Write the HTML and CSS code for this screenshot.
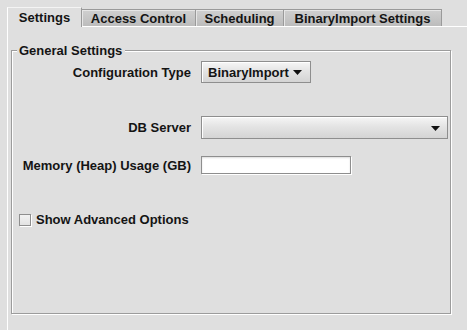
FILE: index.html
```html
<!DOCTYPE html>
<html>
<head>
<meta charset="utf-8">
<link rel="stylesheet" href="styles.css">
</head>
<body>
<div class="window">
  <div class="tabs">
    <div class="tab selected">Settings</div>
    <div class="tab w-access">Access Control</div>
    <div class="tab w-sched">Scheduling</div>
    <div class="tab w-binary">BinaryImport Settings</div>
  </div>
  <div class="pane">
    <div class="group">
      <div class="legend">General Settings</div>
      <div class="row row-config">
        <span class="label">Configuration Type</span>
        <div class="combo combo-small">
          <span class="combo-text">BinaryImport</span>
          <svg class="arrow" width="9" height="5" viewBox="0 0 9 5"><polygon points="0,0 9,0 4.5,5" fill="#111"/></svg>
        </div>
      </div>
      <div class="row row-db">
        <span class="label">DB Server</span>
        <div class="combo combo-wide">
          <span class="combo-text"></span>
          <svg class="arrow" width="9" height="5" viewBox="0 0 9 5"><polygon points="0,0 9,0 4.5,5" fill="#111"/></svg>
        </div>
      </div>
      <div class="row row-mem">
        <span class="label">Memory (Heap) Usage (GB)</span>
        <div class="field"></div>
      </div>
      <div class="check-row">
        <span class="checkbox"></span>
        <span class="check-label">Show Advanced Options</span>
      </div>
    </div>
  </div>
</div>
</body>
</html>
```

FILE: styles.css
```css
html, body {
  margin: 0;
  padding: 0;
}
body {
  background: #dfdfdf;
  font-family: "Liberation Sans", Arial, sans-serif;
  font-weight: bold;
  font-size: 13px;
  color: #141414;
  width: 467px;
  height: 330px;
  overflow: hidden;
}
.window {
  padding: 7px 0 0 7px;
}
.tabs {
  display: flex;
  align-items: flex-end;
  height: 19px;
  position: relative;
  z-index: 1;
}
.tab {
  box-sizing: border-box;
  height: 17px;
  border-top: 1px solid #9a9a9a;
  border-right: 1px solid #9a9a9a;
  background: linear-gradient(#d0d0d0, #bcbcbc);
  box-shadow: inset 1px 1px 0 #e6e6e6;
  display: flex;
  align-items: center;
  justify-content: center;
  line-height: 15px;
  white-space: nowrap;
}
.tab.selected {
  width: 75px;
  height: 20px;
  margin-bottom: -1px;
  background: #dfdfdf;
  border-top: 1px solid #f4f4f4;
  border-left: 1px solid #ffffff;
  border-right: 1px solid #9a9a9a;
  box-shadow: none;
  padding-bottom: 1px;
}
.w-access { width: 114px; }
.w-sched { width: 88px; }
.w-binary { width: 158px; }

.pane {
  border-top: 1px solid #ffffff;
  border-left: 1px solid #ffffff;
  padding: 23px 0 0 3px;
  height: 310px;
  box-sizing: border-box;
}
.group {
  position: relative;
  box-sizing: border-box;
  width: 440px;
  height: 264px;
  border: 1px solid #9c9c9c;
  box-shadow: inset 1px 1px 0 #ffffff, 1px 1px 0 #ffffff;
  padding: 10px 2px 0 0;
}
.legend {
  position: absolute;
  top: -8px;
  left: 5px;
  padding: 0 3px 0 2px;
  background: #dfdfdf;
  line-height: 16px;
}
.row {
  display: grid;
  grid-template-columns: 179px auto;
  column-gap: 10px;
  align-items: center;
  justify-items: start;
}
.label {
  justify-self: end;
  white-space: nowrap;
}
.row-config { margin-top: 0; }
.row-db { margin-top: 33px; }
.row-mem { margin-top: 17px; }

.combo {
  box-sizing: border-box;
  display: flex;
  align-items: center;
  justify-content: space-between;
  border: 1px solid #8e8e8e;
  box-shadow: inset 1px 1px 0 #ffffff;
  background: linear-gradient(#f6f6f6 0%, #e4e4e4 45%, #d4d4d4 100%);
}
.combo-small {
  width: 110px;
  height: 22px;
  padding: 0 8px 0 6px;
}
.combo-wide {
  width: 247px;
  height: 23px;
  padding: 1px 7px 0 6px;
}
.arrow {
  display: block;
  flex: none;
}
.field {
  box-sizing: border-box;
  width: 150px;
  height: 18px;
  border: 1px solid #8e8e8e;
  background: #ffffff;
  box-shadow: inset 0 1px 2px #dcdcdc, 1px 1px 0 #ffffff;
}
.check-row {
  display: flex;
  align-items: center;
  margin-top: 38px;
  padding-left: 7px;
  gap: 5px;
}
.checkbox {
  box-sizing: border-box;
  width: 12px;
  height: 12px;
  border: 1px solid #8e8e8e;
  background: linear-gradient(#f2f2f2, #e2e2e2);
  box-shadow: 1px 1px 0 #ffffff;
}
.check-label {
  white-space: nowrap;
}
```
